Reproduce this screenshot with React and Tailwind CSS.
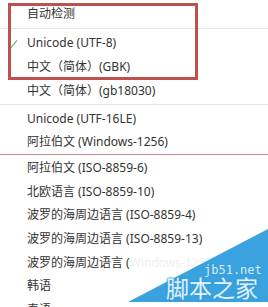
import React from "react";

const rows = [
  { label: "自动检测", h: "h-6", sep: "gray" },
  { label: "Unicode (UTF-8)", h: "h-6", checked: true },
  { label: "中文（简体）(GBK)", h: "h-6" },
  { label: "中文（简体）(gb18030)", h: "h-[23px]", sep: "gray" },
  { label: "Unicode (UTF-16LE)", h: "h-6" },
  { label: "阿拉伯文 (Windows-1256)", h: "h-[22px]", sep: "red" },
  { label: "阿拉伯文 (ISO-8859-6)", h: "h-6" },
  { label: "北欧语言 (ISO-8859-10)", h: "h-[23px]" },
  { label: "波罗的海周边语言 (ISO-8859-4)", h: "h-6" },
  { label: "波罗的海周边语言 (ISO-8859-13)", h: "h-6" },
  { label: "波罗的海周边语言 (", faded: "Windows-1257)", h: "h-[23px]" },
  { label: "韩语", h: "h-6" },
  { label: "泰语", h: "h-6" },
];

const Separator = ({ type }) =>
  type === "red" ? (
    <div className="h-[3px] flex flex-col pt-px">
      <div className="h-px bg-[#d48a8a]" />
    </div>
  ) : (
    <div className="h-[5px] flex flex-col pt-[2px]">
      <div className="h-px bg-[#e6e6e6]" />
    </div>
  );

export default function App() {
  return (
    <div
      className="relative w-[268px] h-[307px] overflow-hidden bg-white text-[#333] text-[12px]"
      style={{ fontFamily: '"Noto Sans", "Noto Sans CJK SC", sans-serif' }}
    >
      <div className="flex flex-col pt-[2px]">
        {rows.map((row, i) => (
          <React.Fragment key={i}>
            <div className={`relative flex items-center pl-[27px] whitespace-nowrap ${row.h}`}>
              {row.checked && (
                <svg className="absolute left-[8px] top-[8px]" width="10" height="10" viewBox="0 0 10 10">
                  <path d="M1.5 6.5 L3 8.5 L9 1.5" fill="none" stroke="#6cc06c" strokeWidth="1.2" />
                </svg>
              )}
              <span>{row.label}</span>
              {row.faded && <span className="text-[#f0f0f0]">{row.faded}</span>}
            </div>
            {row.sep && <Separator type={row.sep} />}
          </React.Fragment>
        ))}
      </div>

      {/* annotation box */}
      <div className="absolute left-[8px] top-[3px] w-[190px] h-[77px] border-[3px] border-[#c0504d]" />

      {/* watermark */}
      <svg className="absolute left-0 top-0" width="268" height="307" viewBox="0 0 268 307">
        <polygon points="128,302 268,229 268,302" fill="#3aa2de" />
      </svg>
      <div
        className="absolute left-[204px] top-[264px] text-[12px] leading-none text-[#d6ebf8] [text-shadow:0_0_2px_#3aa2de,0_0_2px_#3aa2de]"
        style={{ fontFamily: '"DejaVu Sans Mono", monospace' }}
      >
        jb51.net
      </div>
      <div
        className="absolute left-[166px] top-[276px] text-[23px] leading-none text-[#e4f2fb] [text-shadow:0_0_2px_#3aa2de,0_0_2px_#3aa2de,0_0_3px_#3aa2de]"
        style={{ fontFamily: '"Noto Sans CJK SC", sans-serif' }}
      >
        脚本之家
      </div>
    </div>
  );
}
